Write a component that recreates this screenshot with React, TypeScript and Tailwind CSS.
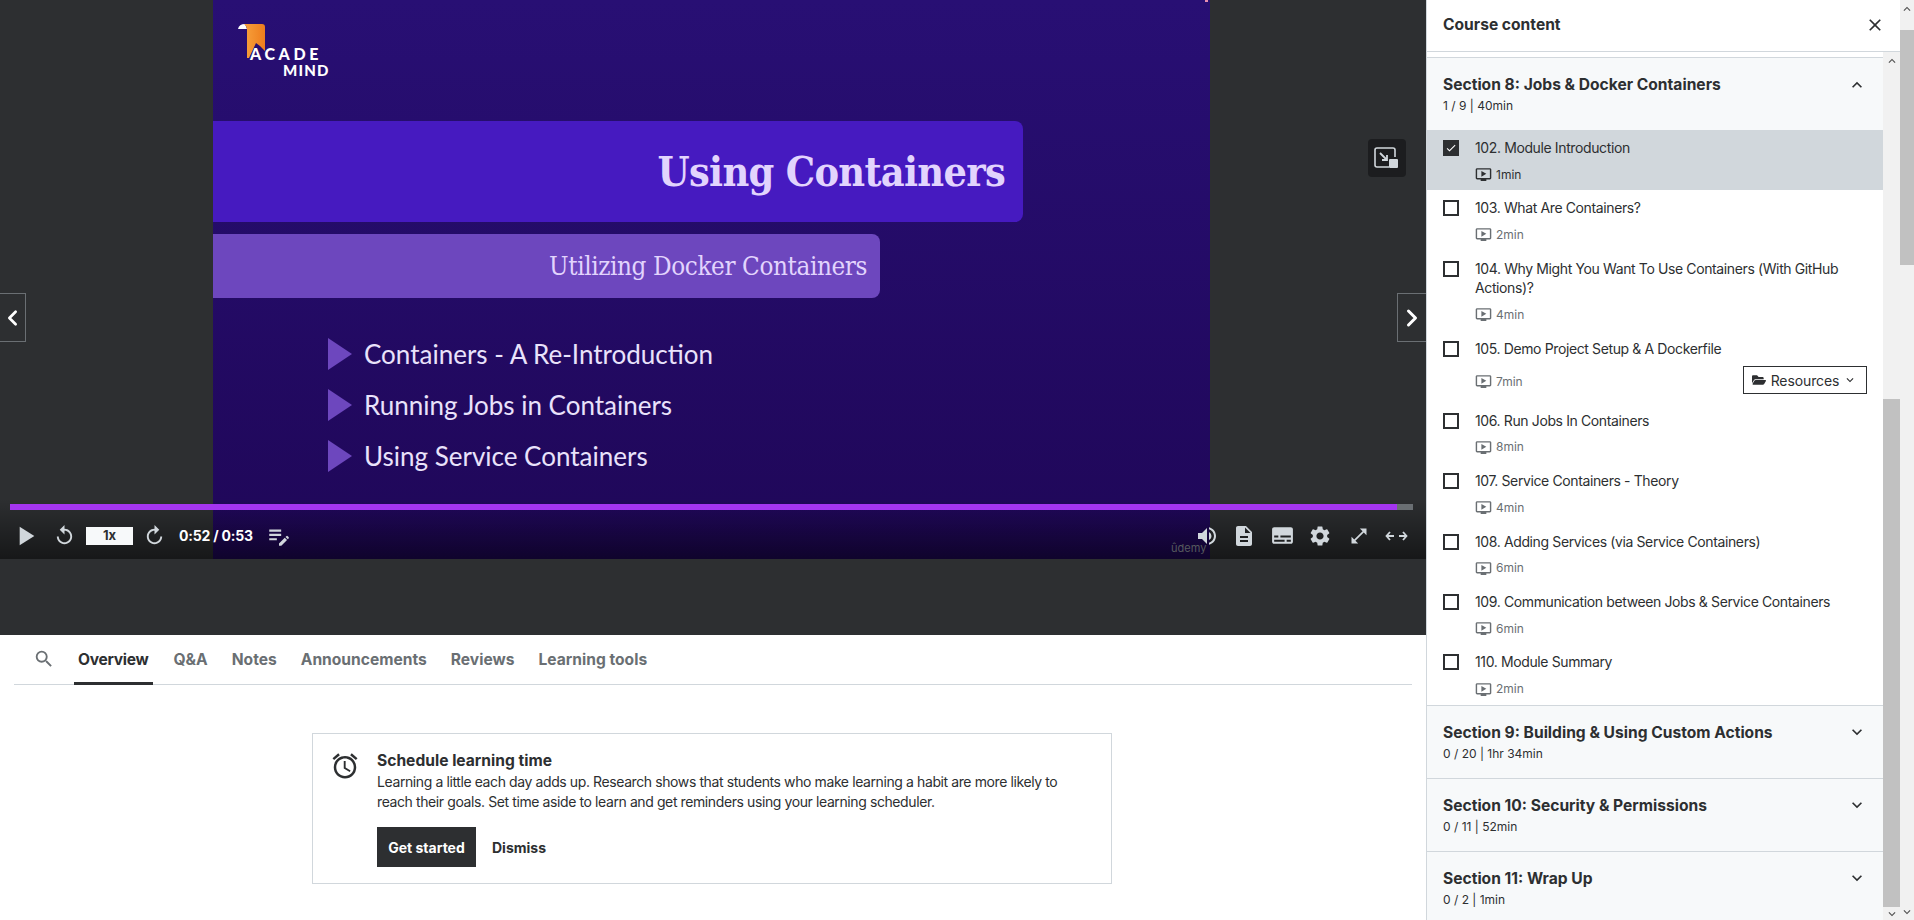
import {
  MdPlayArrow,
  MdReplay,
  MdEditNote,
  MdVolumeUp,
  MdDescription,
  MdSubtitles,
  MdSettings,
  MdOpenInFull,
  MdSearch,
  MdClose,
  MdExpandMore,
  MdExpandLess,
  MdCheck,
  MdOutlineOndemandVideo,
  MdOutlineAccessAlarm,
  MdKeyboardArrowUp,
  MdKeyboardArrowDown,
} from 'react-icons/md';
import { FaFolderOpen } from 'react-icons/fa';
import { ChevronLeft, ChevronRight } from 'lucide-react';

const lectures = [
  { title: '102. Module Introduction', time: '1min', done: true, row: 'h-[60.4px]' },
  { title: '103. What Are Containers?', time: '2min', row: 'h-[60.4px]' },
  { title: '104. Why Might You Want To Use Containers (With GitHub Actions)?', time: '4min', row: 'h-[80.1px]' },
  { title: '105. Demo Project Setup & A Dockerfile', time: '7min', resources: true, row: 'h-[72px]' },
  { title: '106. Run Jobs In Containers', time: '8min', row: 'h-[60.4px]' },
  { title: '107. Service Containers - Theory', time: '4min', row: 'h-[60.4px]' },
  { title: '108. Adding Services (via Service Containers)', time: '6min', row: 'h-[60.4px]' },
  { title: '109. Communication between Jobs & Service Containers', time: '6min', row: 'h-[60.4px]' },
  { title: '110. Module Summary', time: '2min', row: 'h-[60.4px]' },
];

const tabs = ['Overview', 'Q&A', 'Notes', 'Announcements', 'Reviews', 'Learning tools'];

function Section({ title, meta, open }: { title: string; meta: string; open?: boolean }) {
  const Chevron = open ? MdExpandLess : MdExpandMore;
  return (
    <div className="h-[73px] bg-[#f7f9fa] border-t border-[#d1d7dc] pl-4 pr-[16px] pt-[16px]">
      <div className="flex items-center justify-between h-[21px]">
        <span className="text-[15.6px] font-bold leading-[21px] text-[#2d2f31]">{title}</span>
        <Chevron className="text-[20px] text-[#2d2f31]" />
      </div>
      <div className="text-[12px] leading-[18px] mt-[2px] text-[#2d2f31]">{meta}</div>
    </div>
  );
}

function Scrollbar({ className, thumb, endClass }: { className: string; thumb: string; endClass: string }) {
  return (
    <div className={`flex flex-col bg-[#f1f1f1] shrink-0 ${className}`}>
      <div className="h-[17px] flex items-center justify-center shrink-0">
        <MdKeyboardArrowUp className="text-[14px] text-[#505050]" />
      </div>
      <div className="flex-1 relative">
        <div className={`absolute left-0 right-0 bg-[#c1c1c1] ${thumb}`}></div>
      </div>
      <div className={`flex items-center justify-center shrink-0 ${endClass}`}>
        <MdKeyboardArrowDown className="text-[14px] text-[#505050]" />
      </div>
    </div>
  );
}

export default function App() {
  return (
    <div className="flex h-[920px] w-[1914px] overflow-hidden bg-white font-['Inter','Liberation_Sans',sans-serif] text-[#2d2f31]">
      {/* Player + tabs */}
      <div className="w-[1426px] shrink-0 flex flex-col">
        <div className="h-[635px] bg-[#2d2f31] shrink-0">
          <div className="relative h-[559px] flex justify-center">
            {/* Slide */}
            <div className="relative w-[997px] ml-[-3px] h-full bg-gradient-to-b from-[#280f74] to-[#1f0758] overflow-hidden">
              <div className="absolute right-[2px] top-0 w-[3px] h-[2px] bg-[#e88fb0]"></div>
              <div className="h-[121px] pl-[25px] pt-[24px]">
                <div className="relative w-[100px] h-[56px]">
                  <svg width="28" height="36" viewBox="0 0 28 36" className="absolute left-0 top-0">
                    <defs>
                      <linearGradient id="rib" x1="0" y1="0" x2="1" y2="0">
                        <stop offset="0" stopColor="#f7a13c" />
                        <stop offset="1" stopColor="#ee7d1d" />
                      </linearGradient>
                    </defs>
                    <path d="M0 5 Q1 0 7 0 L9 5 Z" fill="#fff" />
                    <path d="M6 0 H24 Q27 0 27 3 V27 L22 22 L18 19 L11 34 H9 V5 Q9 2 6 0 Z" fill="url(#rib)" />
                  </svg>
                  <span className="absolute left-[12px] top-[22px] text-[16px] leading-[15px] font-black tracking-[3.6px] text-white font-['Lato',sans-serif]">ACADE</span>
                  <span className="absolute left-[45px] top-[39px] text-[15px] leading-[15px] font-black tracking-[1.2px] text-white font-['Lato',sans-serif]">MIND</span>
                </div>
              </div>
              <div className="w-[810px] h-[101px] bg-[#461ac0] rounded-r-lg flex items-center justify-end pr-[18px] pt-[3px]">
                <span className="font-['DejaVu_Serif',serif] [font-stretch:condensed] font-bold text-[41px] tracking-[-0.7px] text-[#e2d4fd]">Using Containers</span>
              </div>
              <div className="w-[667px] h-[64px] mt-[12px] bg-[#6d47be] rounded-r-lg flex items-center justify-end pr-[13px]">
                <span className="font-['DejaVu_Serif',serif] [font-stretch:condensed] text-[25.8px] tracking-[-0.4px] text-[#e2d4fd]">Utilizing Docker Containers</span>
              </div>
              <div className="mt-[38px] pl-[115px] flex flex-col gap-[15px]">
                {['Containers - A Re-Introduction', 'Running Jobs in Containers', 'Using Service Containers'].map((t) => (
                  <div key={t} className="flex items-center h-[36px]">
                    <svg width="24" height="32" viewBox="0 0 24 32" className="shrink-0">
                      <path d="M0 0 L24 16 L0 32 Z" fill="#6d47be" />
                    </svg>
                    <span className="ml-[12px] font-['Lato',sans-serif] text-[26px] text-[#e9e2fb]">{t}</span>
                  </div>
                ))}
              </div>
            </div>

            {/* Prev / next */}
            <button className="absolute left-0 top-[293px] w-[26px] h-[49px] border border-l-0 border-[#6a6f73] bg-[#2d2f31] flex items-center justify-center">
              <ChevronLeft size={30} strokeWidth={2.6} className="text-white" />
            </button>
            <button className="absolute right-0 top-[293px] w-[29px] h-[49px] border border-r-0 border-[#6a6f73] bg-[#2d2f31] flex items-center justify-center">
              <ChevronRight size={30} strokeWidth={2.6} className="text-white" />
            </button>

            {/* PiP */}
            <button className="absolute left-[1368px] top-[139px] w-[38px] h-[38px] rounded bg-[#1c1d1f] flex items-center justify-center">
              <svg width="26" height="22" viewBox="0 0 26 22" fill="none">
                <path d="M15 20 H3 Q1 20 1 18 V3 Q1 1 3 1 H19 Q21 1 21 3 V10" stroke="#d1d7dc" strokeWidth="1.6" />
                <path d="M6 6 L13 13 M13 8 V13 H8" stroke="#d1d7dc" strokeWidth="1.8" />
                <rect x="15" y="12" width="9" height="9" rx="1" fill="#d1d7dc" />
              </svg>
            </button>

            {/* Controls */}
            <div className="absolute left-0 right-0 bottom-0 h-[60px] bg-gradient-to-b from-transparent to-black/50 flex flex-col justify-end">
              <div className="ml-[10px] mr-[13px] h-[6px] bg-[#6a6f73]">
                <div className="h-full w-[1387px] bg-[#a435f0]"></div>
              </div>
              <div className="h-[49px] pt-[2px] relative flex items-center text-[#d1d7dc]">
                <MdPlayArrow className="text-[32px] ml-[9px]" />
                <MdReplay className="text-[23px] ml-[12px]" />
                <div className="ml-[10px] w-[47px] h-[18px] bg-[#f7f9fa] text-[#2d2f31] text-[13px] font-bold flex items-center justify-center">1x</div>
                <MdReplay className="text-[23px] ml-[10px] -scale-x-100" />
                <span className="ml-[13px] text-[14px] tracking-[-0.2px] font-bold text-white">0:52 / 0:53</span>
                <MdEditNote className="text-[26px] ml-[13px]" />
                <div className="flex-1"></div>
                <span className="absolute left-[1171px] top-[31px] text-[11px] leading-[14px] text-[#565a5e]">ûdemy</span>
                <MdVolumeUp className="text-[24px] relative" />
                <MdDescription className="text-[24px] ml-[13px]" />
                <MdSubtitles className="text-[25px] ml-[14px]" />
                <MdSettings className="text-[24px] ml-[13px]" />
                <MdOpenInFull className="text-[20px] ml-[17px]" />
                <svg width="23" height="10" viewBox="0 0 23 10" fill="none" stroke="currentColor" strokeWidth="1.8" className="ml-[16px] mr-[18px]">
                  <path d="M5 1 L1.5 5 L5 9 M18 1 L21.5 5 L18 9 M2 5 H9 M14 5 H21" />
                </svg>
              </div>
            </div>
          </div>
        </div>

        {/* Tabs */}
        <div className="h-[50px] shrink-0 mx-[14px] border-b border-[#d1d7dc] flex items-center">
          <MdSearch className="text-[22px] text-[#6a6f73] ml-[19px] mr-[19px] -mt-[2px]" />
          <div className="flex gap-[16px] h-full">
            {tabs.map((t, i) => (
              <div key={t} className={`h-[50px] pl-[4px] flex items-center text-[15.6px] font-bold ${i === 0 ? 'pr-[5px] pt-[2px] text-[#2d2f31] border-b-[3px] border-[#2d2f31] tracking-[-0.3px]' : 'pr-[4px] pb-[1px] text-[#6a6f73]'}`}>
                {t}
              </div>
            ))}
          </div>
        </div>

        {/* Schedule card */}
        <div className="ml-[312px] mt-[48px] w-[800px] h-[151px] border border-[#d1d7dc] flex pl-[17px] pt-[17px]">
          <MdOutlineAccessAlarm className="text-[30px] shrink-0 text-[#2d2f31]" />
          <div className="ml-[17px]">
            <div className="text-[15.6px] font-bold leading-[21px] -mt-[1px]">Schedule learning time</div>
            <p className="text-[14px] tracking-[-0.4px] leading-[20px] w-[700px] mt-[1px]">
              Learning a little each day adds up. Research shows that students who make learning a habit are more likely to reach their goals. Set time aside to learn and get reminders using your learning scheduler.
            </p>
            <div className="flex items-center mt-[15px]">
              <button className="w-[99px] h-[40px] bg-[#2d2f31] text-white text-[14px] font-bold">Get started</button>
              <span className="ml-[16px] text-[14px] font-bold">Dismiss</span>
            </div>
          </div>
        </div>
      </div>

      {/* Course content */}
      <div className="w-[474px] shrink-0 border-l border-[#d1d7dc] flex flex-col">
        <div className="h-[52px] shrink-0 border-b border-[#d1d7dc] flex items-center justify-between pl-[16px] pr-[15px] pb-[1px]">
          <span className="text-[15.6px] font-bold">Course content</span>
          <MdClose className="text-[20px]" />
        </div>
        <div className="flex-1 flex min-h-0">
          <div className="w-[456px] shrink-0 pt-[5px] overflow-hidden">
            <Section title="Section 8: Jobs & Docker Containers" meta="1 / 9 | 40min" open />
            {lectures.map((l) => (
              <div key={l.title} className={`flex pl-[16px] pr-[16px] pt-[10px] ${l.row} ${l.done ? 'bg-[#d1d7dc]' : ''}`}>
                <div className={`w-[16px] h-[16px] shrink-0 border-2 border-[#2d2f31] flex items-center justify-center ${l.done ? 'bg-[#2d2f31]' : ''}`}>
                  {l.done && <MdCheck className="text-[12px] text-white" />}
                </div>
                <div className="ml-[16px] flex-1 min-w-0">
                  <div className="text-[14px] tracking-[-0.38px] leading-[19.6px] -mt-[2px]">{l.title}</div>
                  <div className="flex items-center justify-between mt-[8px]">
                    <div className={`flex items-center text-[12px] h-[18px] ${l.done ? 'text-[#2d2f31]' : 'text-[#6a6f73]'} ${l.resources ? 'mt-[3px]' : ''}`}>
                      <MdOutlineOndemandVideo className="text-[17px] mr-[4px]" />
                      {l.time}
                    </div>
                    {l.resources && (
                      <button className="w-[124px] h-[28px] border border-[#2d2f31] flex items-center justify-center text-[14px] tracking-[-0.1px] text-[#2d2f31]">
                        <FaFolderOpen className="text-[14px] mr-[5px] ml-[1px] text-[#2d2f31]" />
                        Resources
                        <MdExpandMore className="text-[14px] ml-[4px] mr-[2px]" />
                      </button>
                    )}
                  </div>
                </div>
              </div>
            ))}
            <Section title="Section 9: Building & Using Custom Actions" meta="0 / 20 | 1hr 34min" />
            <Section title="Section 10: Security & Permissions" meta="0 / 11 | 52min" />
            <Section title="Section 11: Wrap Up" meta="0 / 2 | 1min" />
          </div>
          <Scrollbar className="w-[17px]" thumb="top-[330px] bottom-0" endClass="h-[13px]" />
        </div>
      </div>
      <Scrollbar className="w-[14px]" thumb="top-[13px] h-[235px]" endClass="h-[17px]" />
    </div>
  );
}
